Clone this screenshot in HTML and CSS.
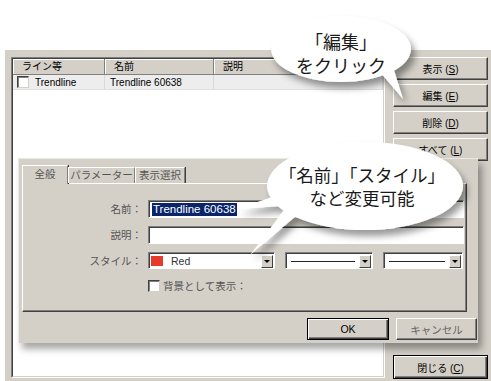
FILE: index.html
```html
<!DOCTYPE html>
<html lang="ja">
<head>
    <meta charset="UTF-8">
    <title>ライン編集</title>
    <link rel="stylesheet" href="styles.css">
</head>
<body>

    <div class="window">
        <div class="list">
            <div class="list-inner">
                <div class="list-head">
                    <div class="col col-line">ライン等</div>
                    <div class="col col-name">名前</div>
                    <div class="col col-desc">説明</div>
                </div>
                <div class="list-row">
                    <div class="cell col-line"><span class="check"></span>Trendline</div>
                    <div class="cell col-name">Trendline 60638</div>
                    <div class="cell col-desc"></div>
                </div>
            </div>
        </div>

        <div class="side">
            <button class="btn">表示 (<u>S</u>)</button>
            <button class="btn">編集 (<u>E</u>)</button>
            <button class="btn">削除 (<u>D</u>)</button>
            <button class="btn">すべて (<u>L</u>)</button>
            <button class="btn btn-default btn-close">閉じる (<u>C</u>)</button>
        </div>
    </div>

    <!-- 編集ダイアログ -->
    <div class="dialog">
        <div class="tabs">
            <span class="tab tab-active">全般</span>
            <span class="tab tab-param">パラメーター</span>
            <span class="tab tab-view">表示選択</span>
        </div>
        <div class="panel">
            <div class="form">
                <label>名前：</label>
                <div class="field"><span class="selected">Trendline 60638</span></div>

                <label>説明：</label>
                <div class="field"></div>

                <label>スタイル：</label>
                <div class="selects">
                    <div class="select select-color">
                        <span class="swatch"></span>Red
                        <span class="arrow"></span>
                    </div>
                    <div class="select select-line">
                        <span class="line"></span>
                        <span class="arrow"></span>
                    </div>
                    <div class="select select-width">
                        <span class="line"></span>
                        <span class="arrow"></span>
                    </div>
                </div>

                <span></span>
                <div class="bg-check"><span class="check"></span>背景として表示：</div>
            </div>
        </div>
        <div class="dialog-buttons">
            <button class="btn btn-default btn-ok">OK</button>
            <button class="btn btn-cancel">キャンセル</button>
        </div>
    </div>

    <!-- 吹き出し -->
    <svg class="callouts" width="491" height="381" viewBox="0 0 491 381">
        <defs>
            <filter id="shade" x="-20%" y="-20%" width="150%" height="170%">
                <feDropShadow dx="4" dy="6" stdDeviation="3.5" flood-color="#000" flood-opacity="0.4"/>
            </filter>
        </defs>
        <g fill="#fff" filter="url(#shade)">
            <ellipse cx="341" cy="49" rx="70" ry="33"/>
            <polygon points="380,72 393,67 403,99"/>
        </g>
        <g fill="#fff" filter="url(#shade)">
            <ellipse cx="365" cy="186" rx="98" ry="44"/>
            <polygon points="272,197 280,206 237,209"/>
            <polygon points="284,210 296,216 250,255"/>
        </g>
    </svg>
    <div class="bubble-text bubble-edit">「編集」<br>をクリック</div>
    <div class="bubble-text bubble-name">「名前」「スタイル」<br>など変更可能</div>

</body>
</html>
```

FILE: styles.css
```css
* {
    box-sizing: border-box;
}

body {
    position: relative;
    width: 491px;
    height: 381px;
    margin: 0;
    overflow: hidden;
    background: #fff;
    font-family: "Liberation Sans", "Noto Sans CJK JP", sans-serif;
    font-size: 10px;
    color: #000;
}

/* 親ウィンドウ */
.window {
    display: flex;
    height: 331px;
    margin: 50px 0 0 5px;
    padding: 7px 0 0 6px;
    background: #d4d0c8;
}

.list {
    width: 374px;
    height: 321px;
    border: 1px solid;
    border-color: #808080 #fff #fff #808080;
}

.list-inner {
    height: 100%;
    background: #fff;
    border: 1px solid;
    border-color: #404040 #d4d0c8 #d4d0c8 #404040;
}

.list-head,
.list-row {
    display: flex;
}

.col {
    height: 16px;
    padding-left: 9px;
    line-height: 15px;
    background: #d4d0c8;
    border-right: 1px solid #808080;
    border-bottom: 1px solid #808080;
    box-shadow: inset 1px 1px #fff;
}

.col-line {
    width: 92px;
}

.col-name {
    width: 109px;
}

.col-desc {
    flex: 1;
}

.list-row {
    height: 15px;
    background: #ededed;
    border-bottom: 1px solid #e0e0e0;
}

.cell {
    display: flex;
    align-items: center;
    padding-left: 5px;
    border-right: 1px solid #d8d8d8;
}

.cell.col-line {
    padding-left: 4px;
}

.check {
    width: 12px;
    height: 12px;
    margin-right: 6px;
    background: #fff;
    border: 1px solid;
    border-color: #404040 #d4d0c8 #d4d0c8 #404040;
    box-shadow: inset 1px 1px #808080;
}

/* 右側のボタン */
.side {
    display: flex;
    flex-direction: column;
    gap: 4px;
    margin-left: 8px;
    padding-bottom: 2px;
}

.btn {
    width: 95px;
    height: 23px;
    padding: 0;
    font: inherit;
    color: #000;
    background: #d4d0c8;
    border: 1px solid;
    border-color: #fff #404040 #404040 #fff;
    box-shadow: inset -1px -1px #808080;
}

.btn-default {
    border-color: #000;
    box-shadow: inset 1px 1px #fff, inset -1px -1px #404040, inset -2px -2px #808080;
}

.btn-close {
    height: 24px;
    margin-top: auto;
}

/* ダイアログ */
.dialog {
    position: absolute;
    left: 18px;
    top: 158px;
    width: 460px;
    height: 185px;
    padding: 7px 1px 0 4px;
    background: #d4d0c8;
    box-shadow: inset 1px 1px #ebe9e4, 4px 6px 7px rgba(0, 0, 0, 0.35);
    font-size: 10.5px;
    color: #555;
}

.tabs {
    position: relative;
    z-index: 1;
    display: flex;
    align-items: flex-end;
    height: 18px;
}

.tab {
    height: 16px;
    line-height: 14px;
    text-align: center;
    border: 1px solid;
    border-color: #fff #808080 transparent #fff;
    border-bottom: 0;
    box-shadow: 1px 0 #404040;
}

.tab-active {
    width: 46px;
    height: 19px;
    margin-bottom: -1px;
    line-height: 16px;
    background: #d4d0c8;
}

.tab-param {
    width: 67px;
}

.tab-view {
    width: 50px;
}

.panel {
    width: 445px;
    height: 129px;
    padding-top: 16px;
    border: 1px solid;
    border-color: #fff #404040 #404040 #fff;
    box-shadow: inset -1px -1px #808080;
}

.form {
    display: grid;
    grid-template-columns: 119px 316px;
    grid-template-rows: 18px 18px 17px 12px;
    column-gap: 6px;
    row-gap: 8px;
}

.form label {
    line-height: 18px;
    text-align: right;
}

.field,
.select {
    background: #fff;
    border: 1px solid;
    border-color: #808080 #fff #fff #808080;
    box-shadow: inset 1px 1px #404040;
}

.field {
    padding: 2px 0 0 3px;
}

.selected {
    display: inline-block;
    padding: 0 1px;
    font-size: 11.5px;
    line-height: 13px;
    color: #fff;
    background: #0a246a;
}

.selects {
    display: flex;
    gap: 10px;
}

.select {
    display: flex;
    align-items: center;
    padding: 1px 1px 0 2px;
    color: #333;
}

.select-color {
    width: 127px;
}

.select-line {
    width: 88px;
}

.select-width {
    width: 80px;
}

.swatch {
    width: 12px;
    height: 10px;
    margin-right: 8px;
    background: #e63b2b;
}

.line {
    flex: 1;
    height: 1px;
    margin: 0 4px 0 3px;
    background: #222;
}

.arrow {
    position: relative;
    width: 12px;
    height: 13px;
    margin-left: auto;
    background: #d4d0c8;
    border: 1px solid;
    border-color: #fff #404040 #404040 #fff;
}

.arrow::after {
    content: "";
    position: absolute;
    left: 2px;
    top: 4px;
    border-left: 3px solid transparent;
    border-right: 3px solid transparent;
    border-top: 3px solid #000;
}

.bg-check {
    display: flex;
    align-items: center;
    margin-top: 5px;
    line-height: 12px;
}

.bg-check .check {
    margin-right: 3px;
}

.dialog-buttons {
    display: flex;
    justify-content: flex-end;
    gap: 7px;
    margin-top: 6px;
}

.btn-ok {
    width: 82px;
    height: 22px;
}

.btn-cancel {
    width: 81px;
    height: 22px;
    color: #666;
}

/* 吹き出し */
.callouts {
    position: absolute;
    left: 0;
    top: 0;
    pointer-events: none;
}

.bubble-text {
    position: absolute;
    font-family: "Noto Sans CJK JP", sans-serif;
    text-align: center;
    color: #1a1a1a;
}

.bubble-edit {
    left: 271px;
    top: 29px;
    width: 140px;
    font-size: 18px;
    line-height: 24px;
}

.bubble-name {
    left: 267px;
    top: 163px;
    width: 190px;
    font-size: 17.5px;
    line-height: 23px;
}
```
